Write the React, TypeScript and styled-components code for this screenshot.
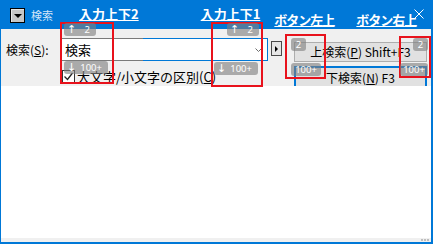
import styled, { createGlobalStyle } from 'styled-components';

const BLUE = '#0078d7';
const FONT = '"Noto Sans CJK JP", "Noto Sans", sans-serif';

const GlobalStyle = createGlobalStyle`
  html, body {
    margin: 0;
    padding: 0;
    background: #fff;
  }
  body {
    font-family: ${FONT};
  }
`;

const Window = styled.div`
  position: relative;
  width: 433px;
  height: 244px;
  display: flex;
  flex-direction: column;
  overflow: hidden;
  font-family: ${FONT};
`;

// ─── Title bar ─────────────────────────────────────────────────────────────

const TitleBar = styled.div`
  flex: none;
  height: 29px;
  box-sizing: border-box;
  padding-left: 10px;
  background: ${BLUE};
  display: flex;
  align-items: flex-start;
`;

const MenuButton = styled.div`
  margin-top: 8px;
  width: 15px;
  height: 15px;
  box-sizing: border-box;
  border: 1px solid #000;
  background: #c6c6c6;
  box-shadow: inset 1px 1px 0 #e6e6e6;
  display: flex;
  align-items: center;
  justify-content: center;

  &::after {
    content: '';
    border-left: 4px solid transparent;
    border-right: 4px solid transparent;
    border-top: 4px solid #000;
  }
`;

const TitleText = styled.span`
  margin-left: 6px;
  margin-top: 8px;
  font-size: 11px;
  line-height: 15px;
  color: #d3e5f7;
  white-space: nowrap;
`;

const TitleLink = styled.a<{ $left: number; $top: number; $spacing?: number }>`
  margin-left: ${({ $left }) => $left}px;
  margin-top: ${({ $top }) => $top}px;
  font-size: 13px;
  font-weight: 700;
  line-height: 15px;
  letter-spacing: ${({ $spacing }) => $spacing ?? 0}px;
  color: #fff;
  text-decoration: underline;
  text-underline-offset: 1px;
  white-space: nowrap;
  cursor: pointer;
`;

const CloseButton = styled.div`
  margin-left: -2px;
  margin-top: 9px;
  width: 10px;
  height: 10px;
  display: flex;
`;

// ─── Body ──────────────────────────────────────────────────────────────────

const Body = styled.div`
  flex: 1;
  display: flex;
  flex-direction: column;
  border-left: 1px solid ${BLUE};
  border-right: 2px solid ${BLUE};
  border-bottom: 2px solid ${BLUE};
`;

const Panel = styled.div`
  flex: none;
  height: 57px;
  box-sizing: border-box;
  padding: 9px 0 0 5px;
  background: #f0f0f0;
  display: flex;
  overflow: hidden;
`;

const LeftArea = styled.div`
  display: flex;
  flex-direction: column;
`;

const SearchRow = styled.div`
  display: flex;
  align-items: flex-start;
`;

const FieldLabel = styled.label`
  width: 55px;
  font-size: 12px;
  line-height: 23px;
  color: #000;
  white-space: nowrap;
`;

const Combo = styled.div`
  width: 207px;
  height: 23px;
  box-sizing: border-box;
  padding: 1px;
  background: linear-gradient(to right, #7a7a7a 0 82px, ${BLUE} 82px);
`;

const ComboInner = styled.div`
  height: 100%;
  background: #fff;
  display: flex;
  align-items: center;
  justify-content: space-between;
  padding: 0 5px 0 3px;
  font-size: 13px;
  color: #000;
`;

const ArrowButton = styled.div`
  margin-left: 3px;
  margin-top: 3px;
  width: 11px;
  height: 15px;
  box-sizing: border-box;
  border: 1px solid #4a4a4a;
  background: #e6e6e6;
  display: flex;
  align-items: center;
  justify-content: center;

  &::after {
    content: '';
    border-top: 3px solid transparent;
    border-bottom: 3px solid transparent;
    border-left: 3px solid #000;
  }
`;

const CheckRow = styled.div`
  margin-top: 8px;
  margin-left: 56px;
  display: flex;
  align-items: center;
  gap: 2px;
  font-size: 13px;
  line-height: 15px;
  color: #000;
  white-space: nowrap;
`;

const CheckBox = styled.div`
  width: 13px;
  height: 13px;
  box-sizing: border-box;
  border: 1px solid #333;
  background: #fff;
  display: flex;
`;

const RightArea = styled.div`
  margin-left: 12px;
  margin-top: 4px;
  display: flex;
  flex-direction: column;
  gap: 4px;
`;

const SearchButton = styled.button<{ $primary?: boolean }>`
  width: 133px;
  height: ${({ $primary }) => ($primary ? 24 : 20)}px;
  flex: none;
  box-sizing: border-box;
  padding: ${({ $primary }) => ($primary ? '2px 0 0' : '0')};
  margin: 0;
  border: ${({ $primary }) => ($primary ? `2px solid ${BLUE}` : '1px solid #adadad')};
  background: #e1e1e1;
  font-family: ${FONT};
  font-size: 12px;
  line-height: 16px;
  color: #000;
  display: flex;
  align-items: ${({ $primary }) => ($primary ? 'flex-start' : 'center')};
  justify-content: center;
  white-space: nowrap;
`;

const ResultArea = styled.div`
  flex: 1;
  background: #fff;
`;

const StatusStrip = styled.div`
  flex: none;
  height: 4px;
  background: #f0f0f0;
  display: flex;
  justify-content: flex-end;
  align-items: center;
  gap: 1px;
  padding-right: 2px;
`;

const GripDot = styled.span`
  width: 2px;
  height: 2px;
  background: #bdbdbd;
`;

// ─── Annotation overlays ───────────────────────────────────────────────────

const Marker = styled.div<{ $x: number; $y: number; $w: number; $h: number }>`
  position: absolute;
  left: ${({ $x }) => $x}px;
  top: ${({ $y }) => $y}px;
  width: ${({ $w }) => $w}px;
  height: ${({ $h }) => $h}px;
  box-sizing: border-box;
  border: 2px solid #e8121c;
  pointer-events: none;
`;

const Badge = styled.div<{ $x: number; $y: number; $w: number; $split?: boolean }>`
  position: absolute;
  left: ${({ $x }) => $x}px;
  top: ${({ $y }) => $y}px;
  width: ${({ $w }) => $w}px;
  height: 13px;
  box-sizing: border-box;
  padding: ${({ $split }) => ($split ? '0 6px 0 3px' : '0')};
  border-radius: 3px;
  background: rgba(128, 128, 128, 0.62);
  color: #fff;
  font-family: "Noto Sans", "Liberation Sans", sans-serif;
  font-size: 9.5px;
  line-height: 13px;
  display: flex;
  align-items: center;
  justify-content: ${({ $split }) => ($split ? 'space-between' : 'center')};
  white-space: nowrap;
`;

const BadgeArrow = styled.span`
  font-family: "DejaVu Sans", sans-serif;
  font-size: 11px;
  line-height: 13px;
`;

const markers = [
  { x: 60, y: 22, w: 54, h: 62 },
  { x: 211, y: 22, w: 52, h: 65 },
  { x: 285, y: 34, w: 41, h: 45 },
  { x: 399, y: 36, w: 32, h: 42 },
];

export default function App() {
  return (
    <>
      <GlobalStyle />
      <Window>
        <TitleBar>
          <MenuButton />
          <TitleText>検索</TitleText>
          <TitleLink $left={26} $top={6}>入力上下2</TitleLink>
          <TitleLink $left={62} $top={6}>入力上下1</TitleLink>
          <TitleLink $left={14} $top={12} $spacing={-1}>ボタン左上</TitleLink>
          <TitleLink $left={22} $top={12} $spacing={-1}>ボタン右上</TitleLink>
          <CloseButton>
            <svg width="10" height="10" viewBox="0 0 10 10">
              <path d="M0.5 0.5 L9.5 9.5 M9.5 0.5 L0.5 9.5" stroke="#fff" strokeWidth="1" fill="none" />
            </svg>
          </CloseButton>
        </TitleBar>

        <Body>
          <Panel>
            <LeftArea>
              <SearchRow>
                <FieldLabel>
                  検索(<u>S</u>):
                </FieldLabel>
                <Combo>
                  <ComboInner>
                    <span>検索</span>
                    <svg width="7" height="4" viewBox="0 0 7 4">
                      <path d="M0.5 0.5 L3.5 3.5 L6.5 0.5" stroke="#6d6d6d" strokeWidth="1" fill="none" />
                    </svg>
                  </ComboInner>
                </Combo>
                <ArrowButton />
              </SearchRow>
              <CheckRow>
                <CheckBox>
                  <svg width="11" height="11" viewBox="0 0 11 11">
                    <path d="M1.5 5.5 L4.5 8.5 L9.5 2" stroke="#222" strokeWidth="1.3" fill="none" />
                  </svg>
                </CheckBox>
                <span>
                  大文字/小文字の区別(<u>C</u>)
                </span>
              </CheckRow>
            </LeftArea>
            <RightArea>
              <SearchButton>
                上検索(<u>P</u>) Shift+F3
              </SearchButton>
              <SearchButton $primary>
                下検索(<u>N</u>) F3
              </SearchButton>
            </RightArea>
          </Panel>
          <ResultArea />
          <StatusStrip>
            <GripDot />
            <GripDot />
            <GripDot />
          </StatusStrip>
        </Body>

        {markers.map((m) => (
          <Marker key={`${m.x}-${m.y}`} $x={m.x} $y={m.y} $w={m.w} $h={m.h} />
        ))}

        <Badge $x={64} $y={23} $w={32} $split>
          <BadgeArrow>↑</BadgeArrow>
          <span>2</span>
        </Badge>
        <Badge $x={64} $y={61} $w={44} $split>
          <BadgeArrow>↓</BadgeArrow>
          <span>100+</span>
        </Badge>
        <Badge $x={227} $y={23} $w={32} $split>
          <BadgeArrow>↑</BadgeArrow>
          <span>2</span>
        </Badge>
        <Badge $x={214} $y={62} $w={44} $split>
          <BadgeArrow>↓</BadgeArrow>
          <span>100+</span>
        </Badge>
        <Badge $x={291} $y={38} $w={15}>2</Badge>
        <Badge $x={291} $y={63} $w={30}>100+</Badge>
        <Badge $x={413} $y={38} $w={15}>2</Badge>
        <Badge $x={400} $y={63} $w={28}>100+</Badge>
      </Window>
    </>
  );
}
